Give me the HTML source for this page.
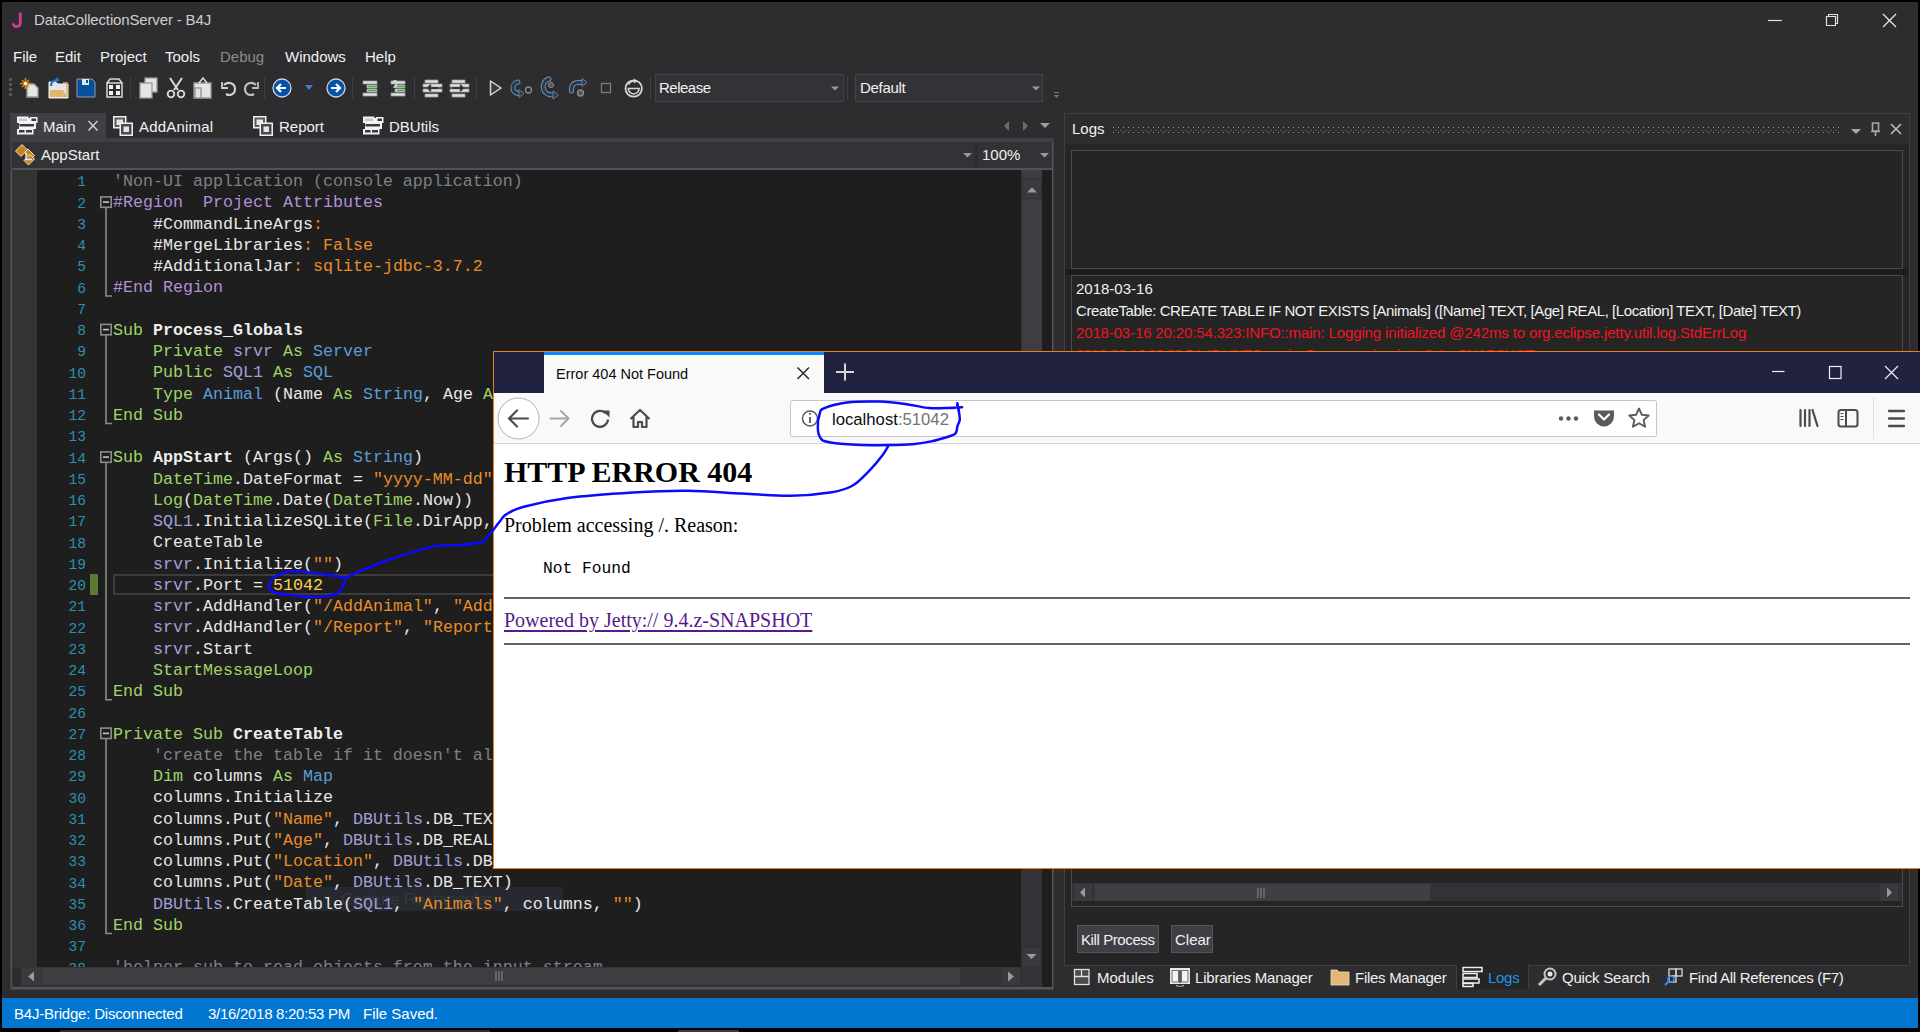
<!DOCTYPE html>
<html><head><meta charset="utf-8">
<style>
*{box-sizing:border-box;margin:0;padding:0}
html,body{width:1920px;height:1032px;overflow:hidden;background:#000}
body{position:relative;font-family:"Liberation Sans",sans-serif;color:#f1f1f1}
.a{position:absolute}
.ui{font-family:"Liberation Sans",sans-serif;font-size:15px;white-space:nowrap}
#win{left:2px;top:2px;width:1916px;height:1026px;background:#2d2d30}
.code{font-family:"Liberation Mono",monospace;font-size:16.67px;white-space:pre;color:#e8e8e8;line-height:21.25px}
.ln{font-family:"Liberation Mono",monospace;font-size:14.6px;color:#2b91af;text-align:right;width:40px;line-height:21.25px;white-space:pre}
.k{color:#a0d468}.t{color:#5c9cd8}.g{color:#a09fd8}.s{color:#e88d2a}.c{color:#7b8188}.r{color:#b38fd8}.b{font-weight:bold;color:#eeeeee}.y{color:#ffd24a}
</style></head><body>
<div id="win" class="a"></div>

<!-- title bar -->
<svg class="a" style="left:0;top:0" width="40" height="40"><path d="M20.3 12.5V22.3C20.3 25.8 18.6 26.6 16.6 26.6C14.6 26.6 13.4 25.6 13.2 23.4" fill="none" stroke="#dc35a0" stroke-width="2.7"/></svg>
<div class="a ui" style="left:34px;top:11px;color:#cfcfcf;font-size:15px;letter-spacing:-0.15px">DataCollectionServer - B4J</div>

<!-- menu -->
<div class="a ui" style="left:13px;top:48px;color:#f1f1f1">File</div>
<div class="a ui" style="left:55px;top:48px;color:#f1f1f1">Edit</div>
<div class="a ui" style="left:100px;top:48px;color:#f1f1f1">Project</div>
<div class="a ui" style="left:165px;top:48px;color:#f1f1f1">Tools</div>
<div class="a ui" style="left:220px;top:48px;color:#8a8a8a">Debug</div>
<div class="a ui" style="left:285px;top:48px;color:#f1f1f1">Windows</div>
<div class="a ui" style="left:365px;top:48px;color:#f1f1f1">Help</div>


<!-- toolbar -->
<svg class="a" style="left:0;top:70px" width="1070" height="36" viewBox="0 70 1070 36">
 <g fill="#55555a"><rect x="9" y="78" width="3" height="3"/><rect x="9" y="83" width="3" height="3"/><rect x="9" y="88" width="3" height="3"/><rect x="9" y="93" width="3" height="3"/></g>
 <!-- new -->
 <path d="M27 84h7l4 4v9h-11z" fill="#e6e6e6" stroke="#9a9a9a" stroke-width="1.4"/>
 <g stroke="#d98d1e" stroke-width="1.6"><path d="M25.5 78v11M20 83.5h11M22 80l7 7M29 80l-7 7"/></g><circle cx="25.5" cy="83.5" r="1.5" fill="#fff"/>
 <!-- open -->
 <path d="M49 82h7l2 2h10v14h-19z" fill="#e4e4e4" stroke="#f0f0f0" stroke-width="1"/>
 <path d="M50 90h13l4 7h-17z" fill="#e3b46a"/><path d="M63 83h4v14" stroke="#e3b46a" stroke-width="1.5" fill="none"/>
 <path d="M51 86c0-4 3-6 7-6" stroke="#1f74c9" stroke-width="2.2" fill="none"/><path d="M56 77l4 3-4 3z" fill="#1f74c9"/>
 <!-- save -->
 <path d="M77 79h15l3 3v15h-18z" fill="#0650a0" stroke="#9a9aa0" stroke-width="1"/><rect x="82" y="79" width="7" height="6" fill="#e6e6e6"/><rect x="86" y="80" width="2" height="3" fill="#0650a0"/>
 <!-- save all/gift -->
 <path d="M107 83h15v14h-15z" fill="none" stroke="#d8d8d8" stroke-width="1.5"/><path d="M107 83l3-4h9l3 4" fill="none" stroke="#d8d8d8" stroke-width="1.5"/>
 <g fill="#f0f0f0"><rect x="109" y="85" width="4" height="4"/><rect x="116" y="85" width="4" height="4"/><rect x="109" y="91" width="4" height="4"/><rect x="116" y="91" width="4" height="4"/></g>
 <rect x="130" y="77" width="1" height="22" fill="#3f3f46"/>
 <!-- copy -->
 <rect x="145" y="78" width="12" height="14" fill="#e4e4e4" stroke="#9a9a9a" stroke-width="1.3"/><rect x="140" y="83" width="12" height="15" fill="#e4e4e4" stroke="#9a9a9a" stroke-width="1.3"/>
 <!-- cut -->
 <path d="M170 78l8 12M182 78l-8 12" stroke="#dcdcdc" stroke-width="2"/><circle cx="171" cy="94" r="3.3" fill="none" stroke="#dcdcdc" stroke-width="1.8"/><circle cx="181" cy="94" r="3.3" fill="none" stroke="#dcdcdc" stroke-width="1.8"/>
 <!-- paste -->
 <path d="M197 83h14v15h-17v-15z" fill="#e4e4e4" stroke="#9a9a9a" stroke-width="1.3"/><path d="M199 83l4-5 4 5" fill="none" stroke="#dcdcdc" stroke-width="1.5"/><rect x="195" y="88" width="6" height="10" fill="#e4e4e4" stroke="#8a8a8a" stroke-width="1.2"/>
 <!-- undo redo -->
 <path d="M224 85c4-4 11-2 11 4s-6 7-9 5" fill="none" stroke="#cfcfcf" stroke-width="2.2"/><path d="M222 82v6h6" fill="none" stroke="#cfcfcf" stroke-width="1.8"/>
 <path d="M256 85c-4-4-11-2-11 4s6 7 9 5" fill="none" stroke="#bdbdbd" stroke-width="2.2"/><path d="M258 82v6h-6" fill="none" stroke="#bdbdbd" stroke-width="1.8"/>
 <rect x="264" y="77" width="1" height="22" fill="#3f3f46"/>
 <!-- nav -->
 <circle cx="282" cy="88" r="9" fill="#0652a8" stroke="#cfd5de" stroke-width="1.3"/><path d="M277 88h9M281 84l-4 4 4 4" stroke="#fff" stroke-width="2.2" fill="none"/>
 <path d="M305 85h8l-4 5z" fill="#3d7fd4"/>
 <circle cx="336" cy="88" r="9" fill="#0652a8" stroke="#cfd5de" stroke-width="1.3"/><path d="M331 88h9M336 84l4 4-4 4" stroke="#fff" stroke-width="2.2" fill="none"/>
 <rect x="352" y="77" width="1" height="22" fill="#3f3f46"/>
 <!-- comment block -->
 <path d="M363 81h14v3h-14zM367 85h10v3h-10zM367 89h10v3h-10zM363 93h14v3h-14z" fill="#e0e0e0" stroke="#9a9a9a" stroke-width="0.8"/><path d="M368 86.5h9M368 90.5h9" stroke="#4caf50" stroke-width="1.3"/>
 <path d="M391 81h14v3h-14zM395 85h10v3h-10zM395 89h10v3h-10zM391 93h14v3h-14z" fill="#e0e0e0" stroke="#9a9a9a" stroke-width="0.8"/><path d="M397 86.5h8M397 90.5h8" stroke="#4caf50" stroke-width="1.3"/><path d="M392 84c0-3 4-4 5-2s-3 4-3 6" stroke="#cfcfcf" stroke-width="1.6" fill="none"/>
 <rect x="414" y="77" width="1" height="22" fill="#3f3f46"/>
 <!-- indent -->
 <path d="M425 80h13v3h-13zM423 84h19v3h-19zM423 89h19v3h-19zM425 94h13v3h-13z" fill="#e0e0e0" stroke="#9a9a9a" stroke-width="0.8"/><path d="M428 88h10M431 85l-3 3 3 3" stroke="#333" stroke-width="1.8" fill="none"/>
 <path d="M452 80h13v3h-13zM450 84h19v3h-19zM450 89h19v3h-19zM452 94h13v3h-13z" fill="#e0e0e0" stroke="#9a9a9a" stroke-width="0.8"/><path d="M453 88h10M460 85l3 3-3 3" stroke="#333" stroke-width="1.8" fill="none"/>
 <rect x="476" y="77" width="1" height="22" fill="#3f3f46"/>
 <!-- run -->
 <path d="M490.5 81l10.5 7-10.5 7z" fill="#3a3a3d" stroke="#d8d8d8" stroke-width="1.5" stroke-linejoin="round"/>
 <g fill="none" stroke-linecap="round" stroke-linejoin="round">
  <path d="M518 82c-4 1-5.5 4-5 7s3 4.5 7 4.5" stroke="#8a8a8a" stroke-width="5"/>
  <path d="M518 82c-4 1-5.5 4-5 7s3 4.5 7 4.5" stroke="#163d66" stroke-width="3"/>
  <path d="M549 79c-5 1.5-6.5 6-5.5 10s4 6 9.5 6" stroke="#8a8a8a" stroke-width="5"/>
  <path d="M549 79c-5 1.5-6.5 6-5.5 10s4 6 9.5 6" stroke="#163d66" stroke-width="3"/>
  <path d="M571.5 91c-1-5 2-8.5 7-8.5h5" stroke="#8a8a8a" stroke-width="5"/>
  <path d="M571.5 91c-1-5 2-8.5 7-8.5h5" stroke="#163d66" stroke-width="3"/>
 </g>
 <path d="M519 89.5l5 4-5 4z" fill="#163d66" stroke="#8a8a8a" stroke-width="0.8"/>
 <path d="M553 91l5.5 4-5.5 4z" fill="#163d66" stroke="#8a8a8a" stroke-width="0.8"/>
 <path d="M582 78.5l5 4-5 4z" fill="#163d66" stroke="#8a8a8a" stroke-width="0.8"/>
 <circle cx="528.5" cy="90" r="3" fill="#2d2d30" stroke="#8a8a8a" stroke-width="1.3"/>
 <circle cx="551" cy="85" r="2.6" fill="#555" stroke="#8a8a8a" stroke-width="1"/>
 <circle cx="580.5" cy="93" r="3" fill="#555" stroke="#8a8a8a" stroke-width="1.3"/>
 <rect x="601.5" y="83.5" width="9" height="9" fill="none" stroke="#7a7a7a" stroke-width="1.3"/>
 <circle cx="633.7" cy="88.5" r="8.2" fill="none" stroke="#d6d6d6" stroke-width="1.8"/>
 <path d="M628.3 88.5a5.4 5.4 0 0 0 10.8 0z" fill="#2d2d30" stroke="#d6d6d6" stroke-width="1.5"/><path d="M628.5 84.5c1.5-2.5 3.5-3.5 6-3.5" fill="none" stroke="#d6d6d6" stroke-width="1.5"/><path d="M634 78.5l3.5 2.5-3.5 2.5z" fill="#d6d6d6"/>
 <rect x="650" y="77" width="1" height="22" fill="#3f3f46"/>
 <rect x="1054" y="92" width="5" height="1" fill="#7a7a7a"/><path d="M1054 95h5l-2.5 3z" fill="#7a7a7a"/>
</svg>
<div class="a" style="left:655px;top:74px;width:189px;height:28px;background:#333337;border:1px solid #434346"></div>
<div class="a ui" style="left:659px;top:79px;color:#f1f1f1;letter-spacing:-0.5px">Release</div>
<svg class="a" style="left:831px;top:86px" width="8" height="5"><path d="M0 0.5h8l-4 4z" fill="#999"/></svg>
<div class="a" style="left:855px;top:74px;width:188px;height:28px;background:#333337;border:1px solid #434346"></div>
<div class="a ui" style="left:860px;top:79px;color:#f1f1f1;letter-spacing:-0.3px">Default</div>
<div class="a" style="left:847px;top:77px;width:1px;height:22px;background:#3f3f46"></div>
<svg class="a" style="left:1032px;top:86px" width="8" height="5"><path d="M0 0.5h8l-4 4z" fill="#999"/></svg>

<!-- editor -->
<div class="a" style="left:10px;top:113px;width:96px;height:29px;background:#3f3f46"></div>
<div class="a" style="left:10px;top:138px;width:1044px;height:4px;background:#3f3f46"></div>
<svg class="a" style="left:0;top:110px" width="460" height="32" viewBox="0 110 460 32">
 <g transform="translate(0 0)">
  <path d="M17 116.5h11.5v1.5h1.5v-1h7.5v6h-1.5v6h-2.5v5.5h-16.5v-5.5h2v-6h-2z" fill="#f2f2f2"/>
  <rect x="19" y="118.5" width="8" height="2.5" fill="#c8c8c8"/>
  <rect x="31.5" y="118.5" width="4.5" height="2.5" fill="#3a3a3e"/>
  <rect x="19.5" y="124" width="14.5" height="2.5" fill="#3a3a3e"/>
  <rect x="19" y="130" width="5.5" height="2.5" fill="#3a3a3e"/>
  <rect x="26" y="130" width="6" height="2.5" fill="#3a3a3e"/>
 </g>
 <path d="M88.5 121l9 9.5M97.5 121l-9 9.5" stroke="#cfcfd3" stroke-width="1.5"/>
 <g transform="translate(0 0)">
  <rect x="113" y="116" width="13.5" height="12.5" fill="#f0f0f0"/><rect x="114.5" y="117.5" width="10.5" height="9.5" fill="#5a5a5e"/><rect x="116.5" y="119.5" width="6.5" height="5.5" fill="#e6e6e6"/>
  <rect x="119.5" y="122.5" width="13.5" height="13.5" fill="#f0f0f0"/><rect x="121" y="124" width="10.5" height="10.5" fill="#4a4a4e"/><rect x="123.5" y="126.5" width="5.5" height="5.5" fill="#e6e6e6"/>
 </g>
 <g transform="translate(140 0)">
  <rect x="113" y="116" width="13.5" height="12.5" fill="#f0f0f0"/><rect x="114.5" y="117.5" width="10.5" height="9.5" fill="#5a5a5e"/><rect x="116.5" y="119.5" width="6.5" height="5.5" fill="#e6e6e6"/>
  <rect x="119.5" y="122.5" width="13.5" height="13.5" fill="#f0f0f0"/><rect x="121" y="124" width="10.5" height="10.5" fill="#4a4a4e"/><rect x="123.5" y="126.5" width="5.5" height="5.5" fill="#e6e6e6"/>
 </g>
 <g transform="translate(346 0)">
  <path d="M17 116.5h11.5v1.5h1.5v-1h7.5v6h-1.5v6h-2.5v5.5h-16.5v-5.5h2v-6h-2z" fill="#f2f2f2"/>
  <rect x="19" y="118.5" width="8" height="2.5" fill="#c8c8c8"/>
  <rect x="31.5" y="118.5" width="4.5" height="2.5" fill="#3a3a3e"/>
  <rect x="19.5" y="124" width="14.5" height="2.5" fill="#3a3a3e"/>
  <rect x="19" y="130" width="5.5" height="2.5" fill="#3a3a3e"/>
  <rect x="26" y="130" width="6" height="2.5" fill="#3a3a3e"/>
 </g>
</svg>
<div class="a ui" style="left:43px;top:118px;color:#f1f1f1">Main</div>
<div class="a ui" style="left:139px;top:118px;color:#f1f1f1;letter-spacing:0.2px">AddAnimal</div>
<div class="a ui" style="left:279px;top:118px;color:#f1f1f1">Report</div>
<div class="a ui" style="left:389px;top:118px;color:#f1f1f1">DBUtils</div>
<svg class="a" style="left:1000px;top:118px" width="56" height="16" viewBox="1000 118 56 16">
 <path d="M1009 121v10l-5-5z" fill="#6d6d70"/><path d="M1023 121v10l5-5z" fill="#6d6d70"/><path d="M1040 123h10l-5 5z" fill="#a0a0a0"/>
</svg>
<!-- sub combo -->
<div class="a" style="left:10px;top:138px;width:1044px;height:852px;background:#3f3f46"></div>
<div class="a" style="left:12px;top:142px;width:963px;height:26px;background:#333337"></div>
<div class="a" style="left:975px;top:142px;width:3px;height:26px;background:#2d2d30"></div>
<div class="a" style="left:978px;top:142px;width:74px;height:26px;background:#333337"></div>
<div class="a" style="left:12px;top:168px;width:1040px;height:2px;background:#515157"></div>
<svg class="a" style="left:0;top:142px" width="1060" height="26" viewBox="0 142 1060 26">
 <g fill="#c9821c" stroke="#f4eee4" stroke-width="0.9" stroke-linejoin="round">
  <path d="M15.5 151l6.5-6.5 5.5 5.5-6.5 6.5z"/>
  <path d="M24.5 152.5l3.5-3.5 6.5 6.5-3.5 3.5z"/>
  <path d="M24 160.5l6-6 4.5 4.5-6 6z"/>
 </g>
 <path d="M26 152.5v7h6" fill="none" stroke="#f4eee4" stroke-width="1.4"/>
 <path d="M963 153h9l-4.5 4.5z" fill="#999"/><path d="M1040 153h9l-4.5 4.5z" fill="#999"/>
</svg>
<div class="a ui" style="left:41px;top:146px;color:#f1f1f1">AppStart</div>
<div class="a ui" style="left:982px;top:146px;color:#f1f1f1">100%</div>
<!-- editor frame -->
<div class="a" style="left:12px;top:170px;width:1040px;height:818px;background:#1e1e1e"></div>
<div class="a" style="left:12px;top:170px;width:25px;height:797px;background:#333333"></div>
<div class="a" style="left:11px;top:170px;width:1px;height:818px;background:#55555a"></div>
<div class="a" style="left:12px;top:987px;width:1041px;height:2px;background:#55555a"></div>
<div class="a" style="left:1052px;top:142px;width:1px;height:847px;background:#55555a"></div>
<!-- v scrollbar -->
<div class="a" style="left:1021px;top:170px;width:21px;height:817px;background:#333337"></div>
<div class="a" style="left:1042px;top:170px;width:10px;height:817px;background:#1e1e1e"></div>
<div class="a" style="left:1022px;top:170px;width:20px;height:8px;background:#3e3e42"></div>
<div class="a" style="left:1023px;top:179px;width:18px;height:19px;background:#3a3a3e"></div>
<div class="a" style="left:1022px;top:199px;width:20px;height:560px;background:#3e3e42"></div>
<div class="a" style="left:1023px;top:948px;width:17px;height:18px;background:#3a3a3e"></div>
<svg class="a" style="left:1023px;top:179px" width="18" height="19"><path d="M4 13.5h10l-5-5z" fill="#9a9a9a"/></svg>
<svg class="a" style="left:1023px;top:948px" width="17" height="18"><path d="M3.5 6h10l-5 5z" fill="#9a9a9a"/></svg>
<!-- h scrollbar -->
<div class="a" style="left:12px;top:967px;width:1009px;height:20px;background:#333337"></div>
<div class="a" style="left:12px;top:967px;width:9px;height:19px;background:#2d2d30"></div>
<div class="a" style="left:21px;top:968px;width:20px;height:17px;background:#3a3a3e"></div>
<div class="a" style="left:42px;top:968px;width:918px;height:17px;background:#3e3e42"></div>
<div class="a" style="left:1001px;top:968px;width:19px;height:17px;background:#3a3a3e"></div>
<svg class="a" style="left:21px;top:968px" width="20" height="17"><path d="M13 3.5v10l-6-5z" fill="#9a9a9a"/></svg>
<svg class="a" style="left:1001px;top:968px" width="19" height="17"><path d="M7 3.5v10l6-5z" fill="#9a9a9a"/></svg>
<svg class="a" style="left:494px;top:971px" width="12" height="10"><path d="M2 0v10M5 0v10M8 0v10" stroke="#8a8a8a" stroke-width="1"/></svg>
<!--CODE-->
<div class="a" style="left:306px;top:887px;width:257px;height:24px;background:#262a30"></div>
<div class="a" style="left:341px;top:890px;font:17px 'Liberation Sans',sans-serif;color:#33373d;white-space:nowrap;letter-spacing:-0.3px">Capture Rectangular</div>
<div class="a" style="left:37px;top:170px;width:984px;height:797px;overflow:hidden">
<div class="a ln" style="left:0px;top:2.3px;width:49px">1
2
3
4
5
6
7
8
9
10
11
12
13
14
15
16
17
18
19
20
21
22
23
24
25
26
27
28
29
30
31
32
33
34
35
36
37
38</div>
<div class="a code" style="left:76px;top:1px"><span class="c">'Non-UI application (console application)</span>
<span class="r">#Region  Project Attributes</span>
    #CommandLineArgs<span class="s">:</span>
    #MergeLibraries<span class="s">: False</span>
    #AdditionalJar<span class="s">: sqlite-jdbc-3.7.2</span>
<span class="r">#End Region</span>

<span class="k">Sub</span> <span class="b">Process_Globals</span>
    <span class="k">Private</span> <span class="g">srvr</span> <span class="k">As</span> <span class="t">Server</span>
    <span class="k">Public</span> <span class="g">SQL1</span> <span class="k">As</span> <span class="t">SQL</span>
    <span class="k">Type</span> <span class="t">Animal</span> (Name <span class="k">As</span> <span class="t">String</span>, Age <span class="k">As</span> <span class="t">Double</span>)
<span class="k">End Sub</span>

<span class="k">Sub</span> <span class="b">AppStart</span> (Args() <span class="k">As</span> <span class="t">String</span>)
    <span class="k">DateTime</span>.DateFormat = <span class="s">"yyyy-MM-dd"</span>
    <span class="k">Log</span>(<span class="k">DateTime</span>.Date(<span class="k">DateTime</span>.Now))
    <span class="g">SQL1</span>.InitializeSQLite(<span class="k">File</span>.DirApp, <span class="s">"data.db"</span>, <span class="k">True</span>)
    CreateTable
    <span class="g">srvr</span>.Initialize(<span class="s">""</span>)
    <span class="g">srvr</span>.Port = <span class="y">51042</span>
    <span class="g">srvr</span>.AddHandler(<span class="s">"/AddAnimal"</span>, <span class="s">"AddAnimal"</span>, <span class="k">False</span>)
    <span class="g">srvr</span>.AddHandler(<span class="s">"/Report"</span>, <span class="s">"Report"</span>, <span class="k">False</span>)
    <span class="g">srvr</span>.Start
    <span class="k">StartMessageLoop</span>
<span class="k">End Sub</span>

<span class="k">Private Sub</span> <span class="b">CreateTable</span>
    <span class="c">'create the table if it doesn't already exist</span>
    <span class="k">Dim</span> columns <span class="k">As</span> <span class="t">Map</span>
    columns.Initialize
    columns.Put(<span class="s">"Name"</span>, <span class="g">DBUtils</span>.DB_TEXT)
    columns.Put(<span class="s">"Age"</span>, <span class="g">DBUtils</span>.DB_REAL)
    columns.Put(<span class="s">"Location"</span>, <span class="g">DBUtils</span>.DB_TEXT)
    columns.Put(<span class="s">"Date"</span>, <span class="g">DBUtils</span>.DB_TEXT)
    <span class="g">DBUtils</span>.CreateTable(<span class="g">SQL1</span>, <span class="s">"Animals"</span>, columns, <span class="s">""</span>)
<span class="k">End Sub</span>

<span class="c">'helper sub to read objects from the input stream</span></div>
</div>
<!--/CODE-->
<!-- folds -->
<svg class="a" style="left:0;top:0" width="1060" height="1000">
<g fill="none" stroke="#8c8c8c" stroke-width="1.6">
<rect x="100.8" y="196.9" width="10.4" height="10.4"/>
<path d="M106 207.3V296.0H112"/>
<rect x="100.8" y="324.4" width="10.4" height="10.4"/>
<path d="M106 334.8V423.5H112"/>
<rect x="100.8" y="451.9" width="10.4" height="10.4"/>
<path d="M106 462.3V699.8H112"/>
<rect x="100.8" y="728.1" width="10.4" height="10.4"/>
<path d="M106 738.6V933.5H112"/>
</g><g stroke="#c8c8c8" stroke-width="1.6">
<path d="M103 202.1h6"/>
<path d="M103 329.6h6"/>
<path d="M103 457.1h6"/>
<path d="M103 733.4h6"/>
</g>
<rect x="90" y="574" width="8" height="21" fill="#5b7a33"/>
<rect x="114" y="575" width="1000" height="19" fill="none" stroke="#3c3c3c" stroke-width="2"/>

</svg>

<!-- logs panel -->
<div class="a" style="left:1064px;top:113px;width:846px;height:853px;background:#252526;border:1px solid #3f3f46"></div>
<div class="a" style="left:1065px;top:114px;width:844px;height:30px;background:#2d2d30"></div>
<div class="a ui" style="left:1072px;top:120px;color:#f1f1f1;font-size:15px">Logs</div>
<svg class="a" style="left:1113px;top:127px" width="727" height="7"><defs><pattern id="dots" width="5" height="7" patternUnits="userSpaceOnUse"><rect x="0" y="0" width="1" height="1" fill="#a0a0a0"/><rect x="2.5" y="3" width="1" height="1" fill="#707072"/><rect x="0" y="5" width="1" height="1" fill="#909090"/></pattern></defs><rect x="0" y="0" width="727" height="7" fill="url(#dots)"/></svg>
<svg class="a" style="left:1845px;top:118px" width="64" height="24" viewBox="1845 118 64 24">
 <path d="M1851 129h10l-5 5z" fill="#a8a8a8"/>
 <path d="M1872.5 123h6v8h-6z" fill="none" stroke="#a8a8a8" stroke-width="1.6"/><path d="M1871 131.5h9M1875.5 132v4" stroke="#a8a8a8" stroke-width="1.6"/>
 <path d="M1891 124l10 10M1901 124l-10 10" stroke="#bdbdbd" stroke-width="1.6"/>
</svg>
<div class="a" style="left:1071px;top:150px;width:832px;height:119px;background:#252526;border:1px solid #4a4a4f"></div>
<div class="a" style="left:1065px;top:269px;width:844px;height:6px;background:#1c1c1c"></div>
<div class="a" style="left:1071px;top:275px;width:832px;height:632px;background:#252526;border:1px solid #4a4a4f"></div>
<div class="a ui" style="left:1076px;top:278px;color:#f1f1f1;line-height:22px;font-size:15px">2018-03-16<br><span style="letter-spacing:-0.43px">CreateTable: CREATE TABLE IF NOT EXISTS [Animals] ([Name] TEXT, [Age] REAL, [Location] TEXT, [Date] TEXT)</span><br><span style="color:#f0141e;letter-spacing:-0.14px">2018-03-16 20:20:54.323:INFO::main: Logging initialized @242ms to org.eclipse.jetty.util.log.StdErrLog</span><br><span style="color:#f0141e;letter-spacing:-0.8px">2018-03-16 20:20:54.454:INFO::main: Server version: jetty-9.4.z-SNAPSHOT</span></div>
<!-- logs h scrollbar -->
<div class="a" style="left:1072px;top:883px;width:830px;height:18px;background:#333337"></div>
<div class="a" style="left:1074px;top:884px;width:18px;height:17px;background:#3a3a3e"></div>
<div class="a" style="left:1095px;top:884px;width:335px;height:17px;background:#3f3f46"></div>
<div class="a" style="left:1880px;top:884px;width:18px;height:17px;background:#3a3a3e"></div>
<svg class="a" style="left:1074px;top:884px" width="18" height="17"><path d="M11 3.5v10l-5-5z" fill="#9a9a9a"/></svg>
<svg class="a" style="left:1880px;top:884px" width="18" height="17"><path d="M7 3.5v10l5-5z" fill="#9a9a9a"/></svg>
<svg class="a" style="left:1256px;top:888px" width="12" height="10"><path d="M2 0v10M5 0v10M8 0v10" stroke="#8a8a8a" stroke-width="1"/></svg>
<!-- buttons -->
<div class="a" style="left:1077px;top:925px;width:82px;height:28px;background:#3f3f46;border:1px solid #555558"></div>
<div class="a ui" style="left:1081px;top:931px;color:#f1f1f1;letter-spacing:-0.4px">Kill Process</div>
<div class="a" style="left:1171px;top:925px;width:42px;height:28px;background:#3f3f46;border:1px solid #555558"></div>
<div class="a ui" style="left:1175px;top:931px;color:#f1f1f1">Clear</div>
<!-- bottom tabs -->
<div class="a" style="left:1456px;top:965px;width:73px;height:24px;background:#252526;border:1px solid #3f3f46;border-top:none;border-bottom:none"></div>
<svg class="a" style="left:1060px;top:960px" width="860" height="36" viewBox="1060 960 860 36">
 <rect x="1074.5" y="969.5" width="14.5" height="15" fill="#4a4a4e" stroke="#e0e0e0" stroke-width="1.3"/><path d="M1074.5 976.5h14.5M1081.5 969.5v7" stroke="#e0e0e0" stroke-width="1.3"/>
 <rect x="1170.5" y="968.5" width="19" height="15" fill="#f0f0f0" stroke="#e8e8e8" stroke-width="1"/><path d="M1172 970.5h6.5v11.5h-6.5zM1181.5 970.5h6.5v11.5h-6.5z" fill="#f4f4f4" stroke="#6a6a6a" stroke-width="1"/><path d="M1180 970v13" stroke="#3a3a3a" stroke-width="1.6"/><path d="M1176 985.5c2 1 6 1 8 0" stroke="#cfcfcf" stroke-width="1.2" fill="none"/>
 <path d="M1331 970h6l2 2h10v13h-18z" fill="#e1b677" stroke="#f0e0c0" stroke-width="0.8"/>
 <g fill="none" stroke="#f0f0f0" stroke-width="1.5"><rect x="1463" y="967.5" width="19" height="4"/><rect x="1463" y="973.5" width="14" height="4"/><rect x="1463" y="979" width="16" height="4"/><rect x="1463" y="983.5" width="10" height="3"/></g>
 <circle cx="1550" cy="974" r="5.5" fill="none" stroke="#c8c8c8" stroke-width="2"/><circle cx="1550" cy="974" r="2.5" fill="#e8e8e8"/><path d="M1546 978l-7 7" stroke="#c8c8c8" stroke-width="3"/>
 <g fill="none" stroke="#d0d0d0" stroke-width="1.4"><rect x="1669" y="969" width="7" height="7"/><rect x="1676" y="969" width="6" height="7"/><rect x="1669" y="976" width="7" height="6"/></g><circle cx="1671" cy="979" r="3" fill="none" stroke="#3d8be0" stroke-width="1.6"/><path d="M1669 981l-4 4" stroke="#3d8be0" stroke-width="2"/>
</svg>
<div class="a ui" style="left:1097px;top:969px;color:#f1f1f1">Modules</div>
<div class="a ui" style="left:1195px;top:969px;color:#f1f1f1;letter-spacing:-0.2px">Libraries Manager</div>
<div class="a ui" style="left:1355px;top:969px;color:#f1f1f1;letter-spacing:-0.28px">Files Manager</div>
<div class="a ui" style="left:1488px;top:969px;color:#2095e8;letter-spacing:-0.3px">Logs</div>
<div class="a ui" style="left:1562px;top:969px;color:#f1f1f1;letter-spacing:-0.2px">Quick Search</div>
<div class="a ui" style="left:1689px;top:969px;color:#f1f1f1;letter-spacing:-0.3px">Find All References (F7)</div>

<!-- title buttons -->
<svg class="a" style="left:1750px;top:6px" width="170" height="30" viewBox="1750 6 170 30">
 <path d="M1768 20.5h14" stroke="#e0e0e0" stroke-width="1.2"/>
 <path d="M1826.5 16.5h9v9h-9z" fill="none" stroke="#e0e0e0" stroke-width="1.2"/><path d="M1828.5 16.5v-2h9v9h-2" fill="none" stroke="#e0e0e0" stroke-width="1.2"/>
 <path d="M1883 14l13 13M1896 14l-13 13" stroke="#e8e8e8" stroke-width="1.3"/>
</svg>
<!-- status bar -->
<div class="a" style="left:2px;top:998px;width:1916px;height:30px;background:#0177d1"></div>
<div class="a ui" style="left:14px;top:1005px;color:#fff;letter-spacing:-0.2px">B4J-Bridge: Disconnected</div>
<div class="a ui" style="left:208px;top:1005px;color:#fff;letter-spacing:-0.28px">3/16/2018 8:20:53 PM</div>
<div class="a ui" style="left:363px;top:1005px;color:#fff">File Saved.</div>

<!-- browser -->
<div class="a" style="left:493px;top:351px;width:1427px;height:518px;background:#fff;border:1px solid #e8811f;border-right:none"></div>
<div class="a" style="left:494px;top:352px;width:1426px;height:41px;background:#20223f"></div>
<div class="a" style="left:544px;top:352px;width:280px;height:41px;background:#f9f9fa;border-top:3px solid #0a84ff"></div>
<div class="a" style="left:556px;top:366px;font:14.5px 'Liberation Sans',sans-serif;color:#0c0c0d;white-space:nowrap">Error 404 Not Found</div>
<svg class="a" style="left:790px;top:360px" width="80" height="30" viewBox="790 360 80 30">
 <path d="M797.5 367.5l11.5 11.5M809 367.5l-11.5 11.5" stroke="#2a2a2e" stroke-width="1.5"/>
 <path d="M845 363.5v17M836 372h18" stroke="#d7d7db" stroke-width="2"/>
</svg>
<svg class="a" style="left:1760px;top:355px" width="160" height="36" viewBox="1760 355 160 36">
 <path d="M1772 371.5h12.5" stroke="#f0f0f4" stroke-width="1.2"/>
 <rect x="1829.5" y="366.5" width="11.5" height="12" fill="none" stroke="#f0f0f4" stroke-width="1.2"/>
 <path d="M1885 366l13 13M1898 366l-13 13" stroke="#f0f0f4" stroke-width="1.2"/>
</svg>
<div class="a" style="left:494px;top:393px;width:1426px;height:51px;background:#f9f9fa;border-bottom:1px solid #d7d7db"></div>
<svg class="a" style="left:494px;top:393px" width="1426" height="50" viewBox="494 393 1426 50">
 <circle cx="518.5" cy="418.5" r="20.5" fill="#fff" stroke="#b1b1b3" stroke-width="1"/>
 <path d="M509 418.5h19M517 410.5l-8 8 8 8" stroke="#4a4a4f" stroke-width="2.2" fill="none" stroke-linecap="round" stroke-linejoin="round"/>
 <path d="M550.5 418.5h18M561 411l7.5 7.5-7.5 7.5" stroke="#a8a8aa" stroke-width="2" fill="none" stroke-linecap="round" stroke-linejoin="round"/>
 <path d="M606 413.5a8 8 0 1 0 2 6" stroke="#4a4a4f" stroke-width="2.2" fill="none"/><path d="M602.5 410.5h7v7z" fill="#4a4a4f"/>
 <path d="M630.5 419l9.5-9 9.5 9M633.5 417v10h4.5v-5h4v5h4.5v-10" stroke="#4a4a4f" stroke-width="2.2" fill="none" stroke-linejoin="round"/>
 <rect x="790.5" y="400.5" width="866" height="36" rx="2" fill="#fff" stroke="#c6c6c8" stroke-width="1"/>
 <circle cx="810" cy="418.5" r="7.5" fill="none" stroke="#5a5a5e" stroke-width="1.5"/><path d="M810 417v6" stroke="#5a5a5e" stroke-width="1.8"/><circle cx="810" cy="413.8" r="1.1" fill="#5a5a5e"/>
 <g fill="#5a5a5e"><circle cx="1561" cy="418.5" r="2.2"/><circle cx="1568.5" cy="418.5" r="2.2"/><circle cx="1576" cy="418.5" r="2.2"/></g>
 <path d="M1594 410.5h20v6a10 10 0 0 1-20 0z" fill="#5a5a5e"/><path d="M1599 414.5l5 5 5-5" stroke="#fff" stroke-width="2.2" fill="none" stroke-linecap="round" stroke-linejoin="round"/>
 <path d="M1639 408.5l2.9 6.3 6.8.7-5.1 4.6 1.5 6.7-6.1-3.5-6.1 3.5 1.5-6.7-5.1-4.6 6.8-.7z" fill="none" stroke="#5a5a5e" stroke-width="1.9" stroke-linejoin="round"/>
 <path d="M1800.5 410v16M1805 410v16M1809.5 410v16M1812.5 410l5 16" stroke="#4a4a4f" stroke-width="2.2" stroke-linecap="round"/>
 <rect x="1838.5" y="410" width="19" height="16.5" rx="2.5" fill="none" stroke="#4a4a4f" stroke-width="2"/><path d="M1846 410v16.5" stroke="#4a4a4f" stroke-width="2"/><path d="M1840.5 413.5h3M1840.5 416.5h3M1840.5 419.5h3" stroke="#4a4a4f" stroke-width="1"/>
 <path d="M1873.5 397v42" stroke="#e0e0e2" stroke-width="1"/>
 <path d="M1889 411h15M1889 418.5h15M1889 426h15" stroke="#4a4a4f" stroke-width="2.3" stroke-linecap="round"/>
</svg>
<div class="a" style="left:832px;top:410px;font:16.7px 'Liberation Sans',sans-serif;color:#0c0c0d;white-space:nowrap">localhost<span style="color:#737373">:51042</span></div>
<!-- page -->
<div class="a" style="left:504px;top:455px;font:bold 30px 'Liberation Serif',serif;color:#000;white-space:nowrap">HTTP ERROR 404</div>
<div class="a" style="left:504px;top:514px;font:20px 'Liberation Serif',serif;color:#000;white-space:nowrap">Problem accessing /. Reason:</div>
<div class="a" style="left:543px;top:559px;font:16.25px 'Liberation Mono',monospace;color:#000;white-space:pre">Not Found</div>
<div class="a" style="left:504px;top:597px;width:1406px;height:2px;background:#646464"></div>
<div class="a" style="left:504px;top:609px;font:20px 'Liberation Serif',serif;color:#551a8b;white-space:nowrap;text-decoration:underline;text-underline-offset:3px">Powered by Jetty:// 9.4.z-SNAPSHOT</div>
<div class="a" style="left:504px;top:643px;width:1406px;height:2px;background:#646464"></div>
<div class="a" style="left:60px;top:1030px;width:430px;height:2px;background:#2d2d30"></div>
<div class="a" style="left:678px;top:1030px;width:61px;height:2px;background:#3a3a3e"></div>
<!-- annotation -->
<svg class="a" style="left:0;top:0" width="1920" height="1032">
 <g fill="none" stroke="#0a0aff" stroke-width="2.5" stroke-linecap="round" stroke-linejoin="round">
  <path d="M957.3 403.2L958.6 410"/>
  <path d="M962.1 407.2C959.3 407.4 950.8 408.0 945.3 408.1C939.8 408.2 935.5 408.7 929.3 408.1C923.0 407.5 916.1 405.5 907.8 404.4C899.5 403.3 889.9 401.9 879.7 401.6C869.6 401.3 856.1 401.4 846.9 402.5C837.7 403.6 828.9 406.2 824.4 408.1C819.9 410.0 820.8 410.4 819.7 413.7C818.6 417.0 817.6 423.7 817.8 427.8C817.9 431.9 818.9 435.8 820.6 438.1C822.3 440.5 822.2 440.8 828.1 441.9C834.0 443.0 846.1 444.2 856.2 444.7C866.3 445.2 879.2 445.2 888.6 445.1C898.0 445.0 905.4 444.8 912.5 444.2C919.6 443.6 925.3 442.6 931.2 441.4C937.1 440.1 943.9 438.0 948.0 436.7C952.1 435.4 954.0 435.2 955.6 433.4C957.2 431.6 956.8 428.2 957.5 425.9C958.2 423.6 959.6 422.2 959.8 419.4C959.9 416.6 958.8 411.4 958.4 409.0C958.0 406.6 957.6 405.5 957.5 404.8"/>
  <path d="M888.6 445.3C887.6 447.0 885.7 451.1 882.5 455.3C879.3 459.5 874.5 465.5 869.4 470.6C864.3 475.7 858.5 482.4 851.9 486.0C845.3 489.6 840.2 490.9 830.0 492.5C819.8 494.1 805.2 495.6 790.6 495.8C776.0 496.0 759.6 494.4 742.5 493.6C725.4 492.8 706.0 490.9 687.8 490.8C669.6 490.6 653.1 491.3 633.1 492.5C613.1 493.7 585.7 495.6 567.5 498.0C549.3 500.4 534.0 504.0 523.8 506.7C513.5 509.4 510.2 512.0 506.2 514.4C502.3 516.8 502.9 517.7 500.0 521.2C497.1 524.8 491.7 532.0 488.8 535.5C485.8 539.0 487.3 540.4 482.5 542.0C477.7 543.6 467.9 544.3 460.0 545.0C452.1 545.7 443.3 544.9 435.0 546.2C426.7 547.6 418.3 550.6 410.0 553.1C401.7 555.6 393.3 558.2 385.0 561.2C376.7 564.3 366.7 568.4 360.0 571.2C353.3 574.1 347.5 577.0 345.0 578.1"/>
  <path d="M345 578C335 575.5 320 573.5 297.5 571.3C286 571.5 278 574 272.5 578.8C268.5 582 268 588 270 590C273 593 280 594.5 291 595C300 596 306 597 312.5 596.9C324 597 333 595.5 337.5 593.1C341 590 343 587 343.8 583.8C344.8 581 345.5 579 345 578"/>
 </g>
</svg>
</body></html>
